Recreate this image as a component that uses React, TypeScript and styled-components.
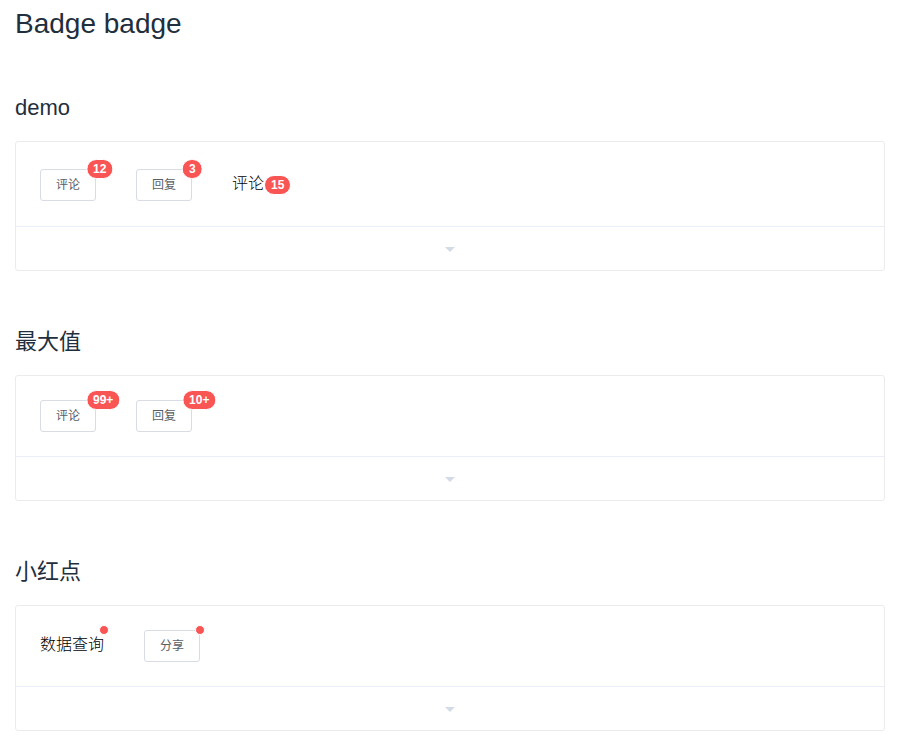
import React from "react";
import styled, { createGlobalStyle } from "styled-components";

const GlobalStyle = createGlobalStyle`
  *, *::before, *::after { box-sizing: border-box; }
  body {
    margin: 0;
    background: #fff;
    font-family: "Liberation Sans", Arial, "Noto Sans CJK SC", sans-serif;
  }
`;

const Page = styled.div`
  padding: 8px 16px 0 15px;
`;

const Title = styled.h1`
  margin: 0;
  font-size: 28px;
  font-weight: normal;
  line-height: 32px;
  color: #1f2f3d;
`;

const SectionTitle = styled.h3`
  margin: 55px 0 20px;
  font-size: 22px;
  font-weight: normal;
  line-height: 26px;
  color: #1f2f3d;
`;

const Section = styled.section`
  & + & > h3 {
    margin-top: 58px;
  }
`;

const Card = styled.div`
  border: 1px solid #ebebeb;
  border-radius: 3px;
`;

const Demo = styled.div<{ $top: number; $bottom: number }>`
  display: flex;
  align-items: flex-start;
  padding: ${(p) => p.$top}px 24px ${(p) => p.$bottom}px;
`;

const Control = styled.div`
  height: 44px;
  border-top: 1px solid #eaeefb;
  display: flex;
  align-items: center;
  justify-content: center;
  padding-top: 2px;
  color: #d3dce6;
`;

const BadgeWrap = styled.div`
  position: relative;
  display: inline-flex;
  align-items: center;
  margin-right: 40px;
`;

const Count = styled.sup<{ $fixed?: boolean }>`
  display: inline-block;
  height: 20px;
  line-height: 18px;
  padding: 0 6px;
  border: 1px solid #fff;
  border-radius: 10px;
  background: #fa5555;
  color: #fff;
  font-size: 12px;
  font-weight: bold;
  white-space: nowrap;
  text-align: center;
  vertical-align: middle;
  font-family: "Liberation Sans", Arial, sans-serif;
  ${(p) =>
    p.$fixed
      ? `position: absolute; top: 0; right: 10px; transform: translateY(-50%) translateX(100%);`
      : `position: static; margin-top: 2px;`}
`;

const Dot = styled.sup`
  position: absolute;
  top: 0;
  right: 5px;
  width: 10px;
  height: 10px;
  border: 1px solid #fff;
  border-radius: 50%;
  background: #fa5555;
  transform: translateY(-50%) translateX(100%);
  margin: 0;
`;

const Button = styled.button`
  height: 32px;
  padding: 0 15px;
  border: 1px solid #d8dce5;
  border-radius: 3px;
  background: #fff;
  color: #5a5e66;
  font-size: 12px;
  line-height: 30px;
  font-family: "Liberation Sans", Arial, "Noto Sans CJK SC", sans-serif;
  cursor: pointer;
`;

const Text = styled.span`
  font-size: 16px;
  font-weight: 300;
  line-height: 22px;
  color: #000;
  margin-top: 4px;
  display: inline-flex;
  align-items: center;
`;

const Caret = () => (
  <svg width="10" height="5" viewBox="0 0 10 5">
    <path d="M0 0 H10 L5 5 Z" fill="currentColor" />
  </svg>
);

const DemoCard: React.FC<{ top?: number; bottom?: number; children: React.ReactNode }> = ({
  top = 24,
  bottom = 24,
  children,
}) => (
  <Card>
    <Demo $top={top} $bottom={bottom}>
      {children}
    </Demo>
    <Control>
      <Caret />
    </Control>
  </Card>
);

export default function App() {
  return (
    <>
      <GlobalStyle />
      <Page>
        <Title>Badge badge</Title>
        <Section>
          <SectionTitle>demo</SectionTitle>
          <DemoCard top={27} bottom={25}>
            <BadgeWrap>
              <Button>评论</Button>
              <Count $fixed>12</Count>
            </BadgeWrap>
            <BadgeWrap>
              <Button>回复</Button>
              <Count $fixed>3</Count>
            </BadgeWrap>
            <Text>
              评论<Count>15</Count>
            </Text>
          </DemoCard>
        </Section>
        <Section>
          <SectionTitle>最大值</SectionTitle>
          <DemoCard>
            <BadgeWrap>
              <Button>评论</Button>
              <Count $fixed>99+</Count>
            </BadgeWrap>
            <BadgeWrap>
              <Button>回复</Button>
              <Count $fixed>10+</Count>
            </BadgeWrap>
          </DemoCard>
        </Section>
        <Section>
          <SectionTitle>小红点</SectionTitle>
          <DemoCard>
            <BadgeWrap>
              <Text>数据查询</Text>
              <Dot />
            </BadgeWrap>
            <BadgeWrap>
              <Button>分享</Button>
              <Dot />
            </BadgeWrap>
          </DemoCard>
        </Section>
      </Page>
    </>
  );
}
